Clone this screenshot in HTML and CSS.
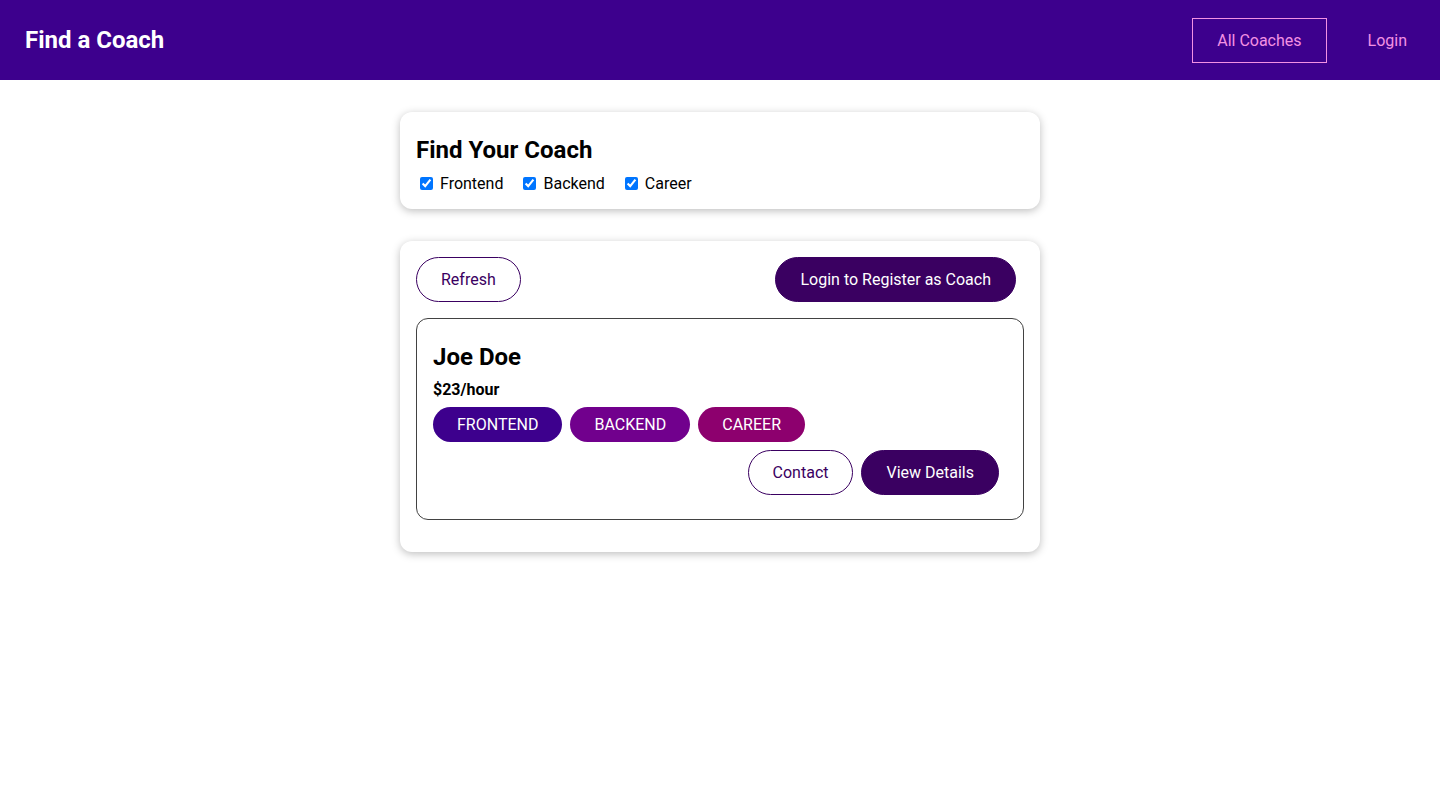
FILE: index.html
```html
<!DOCTYPE html>
<html lang="en">
<head>
<meta charset="utf-8">
<title>Find a Coach</title>
<link rel="stylesheet" href="styles.css">
</head>
<body>
<header class="header">
  <nav class="nav">
    <h1 class="brand"><a href="#">Find a Coach</a></h1>
    <ul class="nav-list">
      <li class="nav-item"><a href="#" class="nav-link active">All Coaches</a></li>
      <li class="nav-item"><a href="#" class="nav-link">Login</a></li>
    </ul>
  </nav>
</header>
<main>
  <section class="card">
    <h2 class="filter-title">Find Your Coach</h2>
    <span class="filter-option"><input type="checkbox" id="frontend" checked><label for="frontend">Frontend</label></span><span class="filter-option"><input type="checkbox" id="backend" checked><label for="backend">Backend</label></span><span class="filter-option"><input type="checkbox" id="career" checked><label for="career">Career</label></span>
  </section>
  <section class="card">
    <div class="controls">
      <button class="btn outline">Refresh</button>
      <a href="#" class="btn">Login to Register as Coach</a>
    </div>
    <ul class="coach-list">
      <li class="coach">
        <h3 class="coach-name">Joe Doe</h3>
        <h4 class="coach-rate">$23/hour</h4>
        <div class="badges">
          <span class="badge frontend">FRONTEND</span><span class="badge backend">BACKEND</span><span class="badge career">CAREER</span>
        </div>
        <div class="actions">
          <a href="#" class="btn outline">Contact</a>
          <a href="#" class="btn">View Details</a>
        </div>
      </li>
    </ul>
  </section>
</main>
</body>
</html>
```

FILE: styles.css
```css
* { box-sizing: border-box; }
html { font-family: Roboto, "Liberation Sans", sans-serif; }
body { margin: 0; }

.header {
  width: 100%;
  height: 80px;
  background: #3d008d;
  display: flex;
  align-items: center;
}
.nav {
  width: 100%;
  display: flex;
  justify-content: space-between;
  align-items: center;
}
.brand { margin: 0; font-size: 24px; }
.header a {
  text-decoration: none;
  color: #f391e3;
  display: inline-block;
  padding: 12px 24px;
  border: 1px solid transparent;
}
.brand a { color: #fff; }
.nav-link.active { border-color: #f391e3; }
.nav-list {
  list-style: none;
  margin: 0;
  padding: 0;
  display: flex;
  align-items: center;
}
.nav-item { margin: 0 8px; }

.card {
  border-radius: 12px;
  box-shadow: 0 2px 8px rgba(0,0,0,0.26);
  padding: 16px;
  margin: 32px auto;
  max-width: 640px;
  background: #fff;
}
.filter-title { margin: 8px 0; font-size: 24px; line-height: 29px; }
.filter-option { margin-right: 16px; }
.filter-option input, .filter-option label { vertical-align: middle; }
.filter-option label { margin-left: 4px; }

.controls { display: flex; justify-content: space-between; }
.btn {
  text-decoration: none;
  padding: 12px 24px;
  font: inherit;
  font-size: 16px;
  background: #3a0061;
  border: 1px solid #3a0061;
  color: #fff;
  border-radius: 30px;
  margin-right: 8px;
  display: inline-block;
  cursor: pointer;
  line-height: normal;
}
.btn.outline { background: transparent; color: #3a0061; }

.coach-list { list-style: none; margin: 0; padding: 0; }
.coach {
  margin: 16px 0;
  border: 1px solid #424242;
  border-radius: 12px;
  padding: 16px;
}
.coach-name { font-size: 24px; margin: 8px 0; line-height: 29px; }
.coach-rate { margin: 8px 0; font-size: 16px; }
.badges, .actions { margin: 8px 0; }
.actions { display: flex; justify-content: flex-end; }
.badge {
  display: inline-block;
  padding: 8px 24px;
  border-radius: 30px;
  margin-right: 8px;
  color: #fff;
  background: #ccc;
}
.badge.frontend { background: #3d008d; }
.badge.backend { background: #71008d; }
.badge.career { background: #8d006e; }
```
